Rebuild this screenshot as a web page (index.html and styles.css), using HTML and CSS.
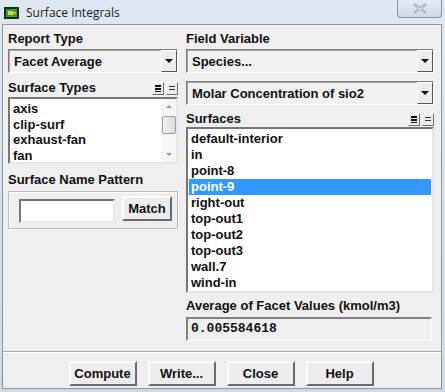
FILE: index.html
```html
<!DOCTYPE html>
<html lang="en">
<head>
  <meta charset="UTF-8">
  <title>Surface Integrals</title>
  <link rel="stylesheet" href="styles.css">
</head>
<body>
<div class="window">
  <header class="titlebar">
    <svg class="app-icon" width="15" height="12" viewBox="0 0 15 12">
      <rect x="0" y="0" width="15" height="12" fill="#1d2a1c"/>
      <rect x="2" y="2" width="11" height="8" fill="#2fa33a"/>
      <rect x="4" y="4" width="5" height="4" fill="#e6d22c"/>
      <rect x="9" y="5" width="3" height="2" fill="#9fd23a"/>
    </svg>
    <span class="title">Surface Integrals</span>
    <div class="close-btn">
      <svg width="14" height="11" viewBox="0 0 14 11">
        <path d="M2 1 L7 4.5 L12 1 L13 2 L8.5 5.5 L13 9 L12 10 L7 6.5 L2 10 L1 9 L5.5 5.5 L1 2 Z" fill="#fff" stroke="#8c96a2" stroke-width="1"/>
      </svg>
    </div>
  </header>

  <div class="client">
    <div class="columns">
      <section class="col-left">
        <div class="label">Report Type</div>
        <div class="combo">
          <span class="combo-text">Facet Average</span>
          <span class="combo-arrow"><i></i></span>
        </div>

        <div class="label-row types-row">
          <span class="label">Surface Types</span>
          <span class="mini-btns">
            <span class="mini-btn"><b class="three"></b></span>
            <span class="mini-btn"><b class="two"></b></span>
          </span>
        </div>
        <div class="listbox types-list">
          <ul class="items">
            <li>axis</li>
            <li>clip-surf</li>
            <li>exhaust-fan</li>
            <li>fan</li>
          </ul>
          <div class="scrollbar">
            <span class="sb-arrow up"></span>
            <span class="sb-thumb"></span>
            <span class="sb-arrow down"></span>
          </div>
        </div>

        <div class="label pattern-label">Surface Name Pattern</div>
        <div class="group">
          <span class="text-input"></span>
          <span class="btn match-btn">Match</span>
        </div>
      </section>

      <section class="col-right">
        <div class="label">Field Variable</div>
        <div class="combo">
          <span class="combo-text">Species...</span>
          <span class="combo-arrow"><i></i></span>
        </div>
        <div class="combo combo-second">
          <span class="combo-text">Molar Concentration of sio2</span>
          <span class="combo-arrow"><i></i></span>
        </div>

        <div class="label-row surfaces-row">
          <span class="label">Surfaces</span>
          <span class="mini-btns">
            <span class="mini-btn"><b class="three"></b></span>
            <span class="mini-btn"><b class="two"></b></span>
          </span>
        </div>
        <div class="listbox surfaces-list">
          <ul class="items">
            <li>default-interior</li>
            <li>in</li>
            <li>point-8</li>
            <li class="selected">point-9</li>
            <li>right-out</li>
            <li>top-out1</li>
            <li>top-out2</li>
            <li>top-out3</li>
            <li>wall.7</li>
            <li>wind-in</li>
          </ul>
        </div>

        <div class="label result-label">Average of Facet Values (kmol/m3)</div>
        <div class="value-box">0.005584618</div>
      </section>
    </div>

    <div class="button-bar">
      <span class="btn action-btn">Compute</span>
      <span class="btn action-btn">Write...</span>
      <span class="btn action-btn">Close</span>
      <span class="btn action-btn">Help</span>
    </div>
  </div>
</div>
</body>
</html>
```

FILE: styles.css
```css
body {
  margin: 0;
  background: #d3dfeb;
  font-family: 'Liberation Sans', Arial, sans-serif;
}
.window {
  width: 445px;
  height: 392px;
  box-sizing: border-box;
  padding: 0 3px 3px 2px;
  display: flex;
  flex-direction: column;
  background: linear-gradient(to bottom, #dfe8f2, #cddae8);
}
.titlebar {
  height: 24px;
  display: flex;
  align-items: center;
  position: relative;
}
.app-icon {
  margin: 1px 7px 0 2px;
}
.title {
  font-family: 'Open Sans', 'Noto Sans', sans-serif;
  font-size: 12px;
  color: #1b1b1b;
}
.close-btn {
  position: absolute;
  top: -1px;
  right: 0;
  width: 43px;
  height: 18px;
  border: 1px solid #8894a3;
  border-top: none;
  border-radius: 0 0 4px 4px;
  background: linear-gradient(to bottom, #e4ebf3, #d0dbe7);
  display: flex;
  align-items: center;
  justify-content: center;
}
.client {
  flex: 1;
  background: #efefef;
  border: 1px solid #8e959c;
  display: flex;
  flex-direction: column;
}
.columns {
  display: flex;
  gap: 8px;
  padding: 6px 0 0 5px;
}
.col-left {
  width: 170px;
  display: flex;
  flex-direction: column;
}
.col-right {
  width: 248px;
  display: flex;
  flex-direction: column;
}
.label {
  font-size: 13px;
  font-weight: bold;
  color: #111;
  height: 16px;
  line-height: 16px;
}
.label-row {
  display: flex;
  justify-content: space-between;
  align-items: center;
  height: 16px;
}
.types-row {
  margin-top: 7px;
}
.surfaces-row {
  margin-top: 6px;
}
.mini-btns {
  display: flex;
  gap: 2px;
}
.mini-btn {
  width: 10px;
  height: 11px;
  border: 1px solid;
  border-color: #fff #6f6f6f #6f6f6f #fff;
  background: #ececec;
  display: flex;
  align-items: center;
  justify-content: center;
}
.mini-btn b {
  display: block;
  width: 6px;
}
.mini-btn .three {
  height: 7px;
  background: repeating-linear-gradient(to bottom, #111 0 2px, transparent 2px 3px);
}
.mini-btn .two {
  height: 4px;
  border-top: 1px solid #333;
  border-bottom: 1px solid #333;
  box-sizing: border-box;
}
.combo {
  margin-top: 2px;
  height: 24px;
  box-sizing: border-box;
  display: flex;
  border: 1px solid;
  border-color: #7c7c7c #fdfdfd #fdfdfd #7c7c7c;
  background: #f1f1f1;
}
.combo-second {
  margin-top: 8px;
}
.combo-text {
  flex: 1;
  font-size: 13px;
  font-weight: bold;
  color: #111;
  padding: 3px 0 0 4px;
  border-left: 1px solid #a8a8a8;
  border-top: 1px solid #a8a8a8;
}
.combo-arrow {
  width: 14px;
  border: 1px solid;
  border-color: #fff #555 #555 #fff;
  background: #ececec;
  display: flex;
  align-items: center;
  justify-content: center;
}
.combo-arrow i {
  width: 0;
  height: 0;
  border-left: 4px solid transparent;
  border-right: 4px solid transparent;
  border-top: 4px solid #111;
}
.listbox {
  margin-top: 1px;
  box-sizing: border-box;
  border: 2px solid;
  border-color: #777 #e6e6e6 #e6e6e6 #777;
  background: #fff;
  display: flex;
}
.types-list {
  height: 67px;
}
.surfaces-list {
  height: 166px;
  margin-top: 0;
}
.items {
  list-style: none;
  margin: 0;
  padding: 2px 1px 0 1px;
  flex: 1;
}
.items li {
  height: 16px;
  line-height: 16px;
  font-size: 13px;
  font-weight: bold;
  color: #111;
  padding-left: 2px;
}
.types-list .items li {
  height: 15.5px;
  line-height: 15px;
}
.items li.selected {
  background: #3399ff;
  color: #fff;
}
.scrollbar {
  width: 15px;
  background: #f6f6f6;
  display: flex;
  flex-direction: column;
  align-items: center;
}
.sb-arrow {
  width: 0;
  height: 0;
  border-left: 3px solid transparent;
  border-right: 3px solid transparent;
}
.sb-arrow.up {
  margin-top: 6px;
  border-bottom: 3px solid #9a9a9a;
}
.sb-arrow.down {
  margin-top: auto;
  margin-bottom: 6px;
  border-top: 3px solid #9a9a9a;
}
.sb-thumb {
  margin-top: 8px;
  width: 12px;
  height: 16px;
  border: 1px solid #9c9c9c;
  border-radius: 2px;
  background: linear-gradient(to right, #f2f2f2, #dcdcdc);
}
.pattern-label {
  margin-top: 8px;
}
.group {
  margin-top: 3px;
  height: 38px;
  box-sizing: border-box;
  border: 1px solid #b9b9b9;
  box-shadow: inset 1px 1px 0 #fff, 1px 1px 0 #fff;
  display: flex;
  align-items: center;
  padding: 0 5px 0 10px;
  gap: 7px;
}
.text-input {
  width: 96px;
  height: 24px;
  box-sizing: border-box;
  border: 2px solid;
  border-color: #777 #e9e9e9 #e9e9e9 #777;
  background: #fff;
  margin-top: 2px;
}
.btn {
  box-sizing: border-box;
  border: 2px solid;
  border-color: #fdfdfd #6b6b6b #6b6b6b #fdfdfd;
  background: #ededed;
  font-size: 13px;
  font-weight: bold;
  color: #111;
  display: flex;
  align-items: center;
  justify-content: center;
}
.match-btn {
  width: 50px;
  height: 25px;
  margin-top: -3px;
}
.result-label {
  margin-top: 5px;
}
.value-box {
  margin-top: 3px;
  height: 24px;
  box-sizing: border-box;
  border: 2px solid;
  border-color: #808080 #f6f6f6 #f6f6f6 #808080;
  font-family: 'Liberation Mono', 'DejaVu Sans Mono', monospace;
  font-size: 13px;
  font-weight: bold;
  color: #111;
  padding: 2px 0 0 3px;
  margin-right: 2px;
}
.button-bar {
  margin-top: 10px;
  border-top: 1px solid #a9a9a9;
  box-shadow: inset 0 1px 0 #fff;
  flex: 1;
  display: flex;
  justify-content: center;
  align-items: flex-start;
  gap: 11px;
  padding-top: 9px;
  padding-right: 2px;
}
.action-btn {
  width: 68px;
  height: 25px;
}
```
